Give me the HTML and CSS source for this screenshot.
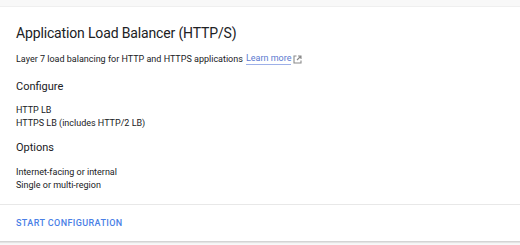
FILE: index.html
```html
<!DOCTYPE html>
<html>
<head>
<meta charset="utf-8">
<link rel="stylesheet" href="styles.css">
</head>
<body>
<div class="card">
  <div class="body">
    <h1 class="title">Application Load Balancer (HTTP/S)</h1>
    <p class="desc">Layer 7 load balancing for HTTP and HTTPS applications <a class="link" href="#">Learn more</a><svg class="ext" width="9" height="9" viewBox="0 0 9 9"><path d="M3.5 1H1v7h7V5.5" fill="none" stroke="#8a8a8a" stroke-width="1.1"/><path d="M5 1h3v3M8 1L4 5" fill="none" stroke="#8a8a8a" stroke-width="1.1"/></svg></p>
    <h2 class="sub">Configure</h2>
    <ul class="list">
      <li>HTTP LB</li>
      <li>HTTPS LB (includes HTTP/2 LB)</li>
    </ul>
    <h2 class="sub sub-options">Options</h2>
    <ul class="list list-options">
      <li>Internet-facing or internal</li>
      <li>Single or multi-region</li>
    </ul>
  </div>
  <div class="footer">
    <a class="action" href="#">START CONFIGURATION</a>
  </div>
</div>
</body>
</html>
```
FILE: styles.css
```css
html, body {
  margin: 0;
  padding: 0;
  background: #f8f8f8;
  font-family: Roboto, "Liberation Sans", Arial, sans-serif;
}
body {
  padding-top: 7px;
  height: 245px;
  box-sizing: border-box;
  overflow: hidden;
}
.card {
  background: #fff;
  box-shadow: 0 -1px 0 #efefef, 0 1px 0 #d4d4d4, 0 2px 1px rgba(0,0,0,0.08);
}
.body {
  padding: 18px 16px 13px 16px;
}
.title {
  margin: 0;
  font-size: 14px;
  font-weight: 400;
  color: #202124;
  line-height: 16px;
  letter-spacing: -0.15px;
}
.desc {
  margin: 12px 0 0 0;
  font-size: 9px;
  line-height: 12px;
  color: #202124;
  display: flex;
  align-items: center;
}
.link {
  color: #5b79cf;
  text-decoration: none;
  border-bottom: 1px solid #9db0e8;
  margin-left: 3px;
  line-height: 11px;
}
.ext {
  margin-left: 2px;
}
.sub {
  margin: 15px 0 0 0;
  font-size: 11px;
  font-weight: 400;
  line-height: 14px;
  color: #202124;
}
.sub-options {
  margin-top: 12px;
}
.list {
  list-style: none;
  margin: 10px 0 0 0;
  padding: 0;
  font-size: 9px;
  line-height: 12.5px;
  color: #202124;
}
.list-options {
  margin-top: 11px;
}
.footer {
  border-top: 1px solid #e8e8e8;
  padding: 12px 16px 12px 16px;
  display: flex;
  font-size: 9px;
  line-height: 12px;
}
.action {
  font-size: 9px;
  font-weight: 500;
  color: #4a7fe6;
  text-decoration: none;
  line-height: 12px;
  letter-spacing: 0.4px;
}
```
